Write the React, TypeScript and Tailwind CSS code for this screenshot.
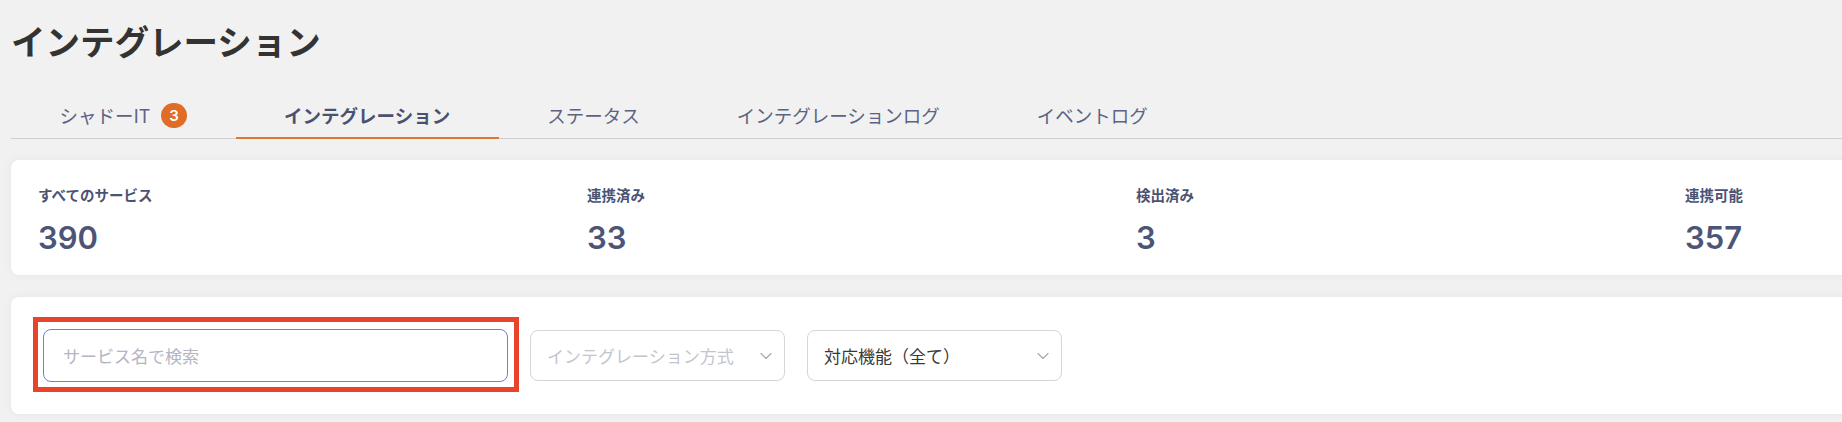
import { ChevronDown } from "lucide-react";

type Tab = { label: string; badge?: number; active?: boolean };

const tabs: Tab[] = [
  { label: "シャドーIT", badge: 3 },
  { label: "インテグレーション", active: true },
  { label: "ステータス" },
  { label: "インテグレーションログ" },
  { label: "イベントログ" },
];

const stats = [
  { label: "すべてのサービス", value: 390 },
  { label: "連携済み", value: 33 },
  { label: "検出済み", value: 3 },
  { label: "連携可能", value: 357 },
];

function Select({ label, muted }: { label: string; muted?: boolean }) {
  return (
    <div className="flex h-[51px] w-[255px] items-center justify-between rounded-[8px] border border-[#d5d5da] bg-white pl-[16px] pr-[8px]">
      <span className={`text-[17px] leading-none ${muted ? "text-[#c3c5cc]" : "text-[#383838]"}`}>{label}</span>
      <ChevronDown size={20} strokeWidth={1.4} className="text-[#a3a7b8]" />
    </div>
  );
}

export default function App() {
  return (
    <div className="h-[422px] w-[1842px] overflow-hidden bg-[#f1f1f1] pl-[11px] font-['Noto_Sans_CJK_JP',sans-serif]">
      <h1 className="pt-[23px] text-[34.5px] font-bold leading-none text-[#333]">インテグレーション</h1>

      <nav className="mt-[45px] flex w-[2400px] border-b border-[#cfcfd2]">
        {tabs.map((tab) => (
          <div
            key={tab.label}
            className={`relative flex h-[35px] items-start gap-[11px] px-[48.5px] text-[18.5px] ${
              tab.active ? "font-bold text-[#4a5170]" : "text-[#5b6382]"
            }`}
          >
            <span className="flex h-[25px] items-center leading-none">{tab.label}</span>
            {tab.badge !== undefined && (
              <span className="flex h-[25px] w-[26px] items-center justify-center rounded-full bg-[#e06c28] font-['Inter',sans-serif] text-[15px] font-semibold leading-none text-white">
                {tab.badge}
              </span>
            )}
            {tab.active && <span className="absolute bottom-[-1px] left-0 right-0 h-[2px] bg-[#e0772f]" />}
          </div>
        ))}
      </nav>

      <section className="mt-[21px] flex w-[2300px] rounded-[8px] bg-white pb-[22px] pl-[27px] pt-[28px] shadow-[0_0_10px_rgba(0,0,0,0.05)]">
        {stats.map((s) => (
          <div key={s.label} className="w-[549px]">
            <div className="text-[14.5px] font-bold leading-none text-[#4b5374]">{s.label}</div>
            <div className="mt-[20px] font-['Inter',sans-serif] text-[31px] font-semibold leading-none text-[#4d5577]">
              {s.value}
            </div>
          </div>
        ))}
      </section>

      <section className="mt-[22px] flex w-[2300px] items-center gap-[22px] rounded-[8px] bg-white p-[32px] shadow-[0_0_10px_rgba(0,0,0,0.05)]">
        <div className="relative">
          <input
            placeholder="サービス名で検索"
            className="h-[53px] w-[465px] rounded-[8px] border border-[#6b7ee6] bg-white pl-[19px] text-[17px] text-[#333] outline-none placeholder:text-[#b3b6c2]"
          />
          <div className="pointer-events-none absolute -bottom-[10px] -left-[10px] -right-[11px] -top-[12px] border-[5px] border-[#e8442b]" />
        </div>
        <Select label="インテグレーション方式" muted />
        <Select label="対応機能（全て）" />
      </section>
    </div>
  );
}
